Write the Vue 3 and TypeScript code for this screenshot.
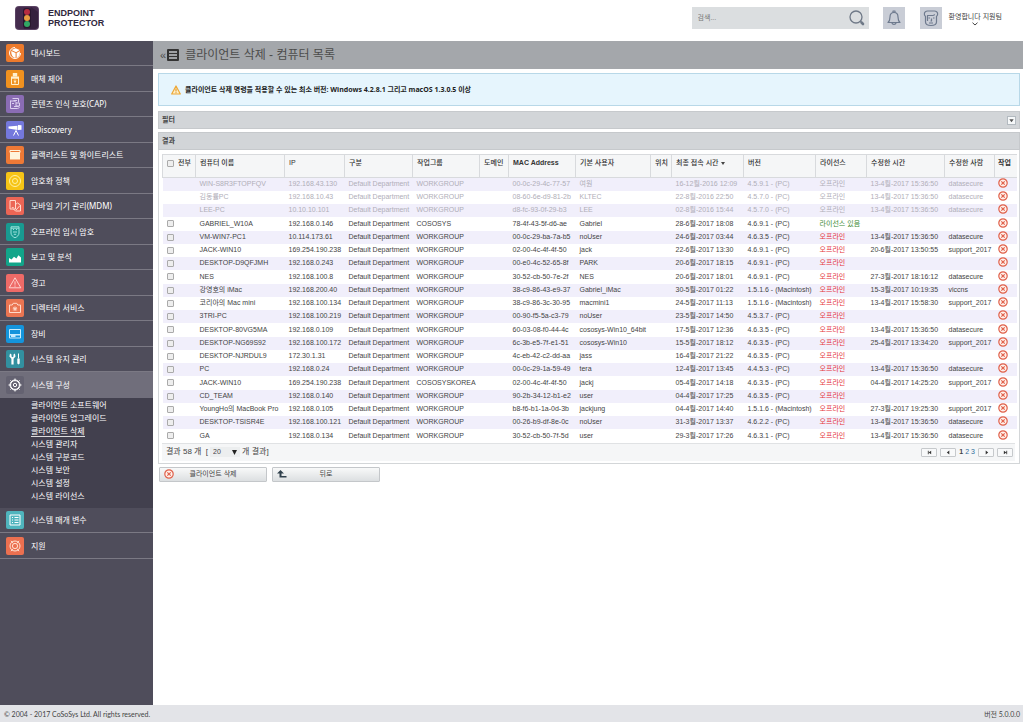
<script setup lang="ts">
import { ref } from 'vue'

interface MenuItem {
  label: string
  color: string
  line?: string
  solid?: string
  tint?: string
}

interface Computer {
  name: string
  ip: string
  group: string
  mac: string
  user: string
  seen: string
  version: string
  license: string
  modified: string
  by: string
  muted: boolean
}

const mainMenu: MenuItem[] = [
  { label: '대시보드', color: '#ec7a2c', line: 'M9 3.5A5.5 5.5 0 1 0 14.5 9', solid: 'M5.5 6l4-1.8 4.2 1.8-3.6 2.2zM5.3 7l4.3 2v4.8C7 13.6 5 11.5 5.3 7zM10.6 9.1l3.3-2c.3 3.4-.8 5.6-3.3 6.6z' },
  { label: '매체 제어', color: '#f0911f', line: 'M5.5 8h7v6.5h-7zM9 9.5v4M7.7 11l1.3 1 1.3-1', solid: 'M6.8 3h4.4v3.2H6.8zM5 6.5h8v2H5z', tint: '#fff0cf' },
  { label: '콘텐즈 인식 보호(CAP)', color: '#8a6cb4', line: 'M6.5 3.5h6v4M4.5 6h4l2 2M4.5 5.5v8h7c2 0 2-2 1-2H8M7.5 5.5h3.5M6 8.5h2M10 8h3.500v3H10z', tint: '#dccff0' },
  { label: 'eDiscovery', color: '#7478dc', line: 'M10 9.5L7.5 14.5M10 9.5l2.5 5', solid: 'M2.5 5.5l9-.8v4.2l-9-1.4zM12 4l3.5.3v4.4L12 9z' },
  { label: '블랙리스트 및 화이트리스트', color: '#ee7936', line: 'M4 4.5h10v2H4z', solid: 'M4 7h10v6.5H4z', tint: '#fff4dc' },
  { label: '암호화 정책', color: '#f6c416', line: 'M9 3.5a5.5 5.5 0 1 0 0 11a5.5 5.5 0 1 0 0-11M9 6.5a2.5 2.5 0 1 0 0 5a2.5 2.5 0 1 0 0-5', tint: '#fff1a4' },
  { label: '모바일 기기 관리(MDM)', color: '#ec6555', line: 'M4 3.5h5.5v8.5H4zM9.5 7.5l2-1.5 3 2v6H9.5l-2-2M10 13l4-4.5M5.8 10.7h2', tint: '#ffd9cd' },
  { label: '오프라인 임시 암호', color: '#189a91', line: 'M5 3.8h8V10c0 2.3-1.8 3.8-4 4.8C6.8 13.8 5 12.3 5 10zM7 6.5h1M10 6.5h1M7 9h4M7.8 11.3h2.4M5 5.2h8', tint: '#9be1dc' },
  { label: '보고 및 분석', color: '#12a58a', solid: 'M3 14.5V10l2.5 1.5L8 8.8l2.4 1.8 2-3.4L15 9.4v5.1z' },
  { label: '경고', color: '#ee6a67', line: 'M9 3.8l5.8 10H3.2zM9 7.3v3.4M9 11.5v1.2', tint: '#ffd3d0' },
  { label: '디렉터리 서비스', color: '#ea7552', line: 'M3.5 6h2.7l1-1.7h3.6l1 1.7h2.7v7.5h-11zM9 7.5v4.5M6.8 9.8h4.4M7.4 8.1l3.2 3.3M10.6 8.1l-3.2 3.3', tint: '#ffd9c9' },
  { label: '장비', color: '#1494dc', line: 'M3.5 4.5h11v8.5h-11z', solid: 'M4 9h10v1.5H4zM5 9.5h4.5V12H5z', tint: '#c7ecff' },
  { label: '시스템 유지 관리', color: '#3290a0', line: 'M12.5 3.5v5', solid: 'M4 3.5l1.5 1v2l1 .8 1-.8v-2l1.4-1 .6 3-1.9 2.3v5.7H5.4V8.8L3.4 6.5zM11.3 8.5h2.4v5l-1.2 1-1.2-1z' },
  { label: '시스템 구성', color: '#646271', line: 'M9 4a5 5 0 1 0 0 10a5 5 0 1 0 0-10M9 4.600a4.400 4.400 0 1 0 0 8.800a4.400 4.400 0 1 0 0-8.800M9 7.3a1.7 1.7 0 1 0 0 3.4a1.7 1.7 0 1 0 0-3.4M9 2.5v2M9 13.5v2M2.5 9h2M13.5 9h2M4.4 4.4l1.4 1.4M12.2 12.2l1.4 1.4M13.6 4.4l-1.4 1.4M5.8 12.2l-1.4 1.4' },
]

const lowerMenu: MenuItem[] = [
  { label: '시스템 매개 변수', color: '#4fb4bd', line: 'M4 4h10v10H4zM6 6.5h1M8.5 6.5h4M6 9h1M8.5 9h4M6 11.5h1M8.5 11.5h4' },
  { label: '지원', color: '#ec7050', line: 'M9 4a5 5 0 1 0 0 10a5 5 0 1 0 0-10M9 6.4a2.6 2.6 0 1 0 0 5.2a2.6 2.6 0 1 0 0-5.2M5 3.8l2 2.5M13 3.8l-2 2.5M5 14.2l2-2.5M13 14.2l-2-2.5', tint: '#ffe3d3' },
]

const subMenu = ['클라이언트 소프트웨어', '클라이언트 업그레이드', '클라이언트 삭제', '시스템 관리자', '시스템 구분코드', '시스템 보안', '시스템 설정', '시스템 라이선스']

const columns = [
  { label: '컴퓨터 이름', width: 89 },
  { label: 'IP', width: 60 },
  { label: '구분', width: 68 },
  { label: '작업그룹', width: 67 },
  { label: '도메인', width: 29 },
  { label: 'MAC Address', width: 67 },
  { label: '기본 사용자', width: 75 },
  { label: '위치', width: 21 },
  { label: '최종 접속 시간', width: 72, sorted: true },
  { label: '버전', width: 72 },
  { label: '라이선스', width: 51 },
  { label: '수정한 시간', width: 78 },
  { label: '수정한 사람', width: 50 },
  { label: '작업', width: 22 },
]

const off = '오프라인'
const source: string[][] = [
  ['WIN-S8R3FTOPFQV', '192.168.43.130', 'WORKGROUP', '00-0c-29-4c-77-57', '여원', '16-12월-2016 12:09', '4.5.9.1 - (PC)', off, '13-4월-2017 15:36:50', 'datasecure'],
  ['김동률PC', '192.168.10.43', 'WORKGROUP', '08-60-6e-d9-81-2b', 'KLTEC', '22-8월-2016 22:50', '4.5.7.0 - (PC)', off, '13-4월-2017 15:36:50', 'datasecure'],
  ['LEE-PC', '10.10.10.101', 'WORKGROUP', 'd8-fc-93-0f-29-b3', 'LEE', '02-8월-2016 15:44', '4.5.7.0 - (PC)', off, '13-4월-2017 15:36:50', 'datasecure'],
  ['GABRIEL_W10A', '192.168.0.146', 'COSOSYS', '78-4f-43-5f-d6-ae', 'Gabriel', '28-6월-2017 18:08', '4.6.9.1 - (PC)', '라이선스 있음', '', ''],
  ['VM-WIN7-PC1', '10.114.173.61', 'WORKGROUP', '00-0c-29-ba-7a-b5', 'noUser', '24-6월-2017 03:44', '4.6.3.5 - (PC)', off, '13-4월-2017 15:36:50', 'datasecure'],
  ['JACK-WIN10', '169.254.190.238', 'WORKGROUP', '02-00-4c-4f-4f-50', 'jack', '22-6월-2017 13:30', '4.6.9.1 - (PC)', off, '20-6월-2017 13:50:55', 'support_2017'],
  ['DESKTOP-D9QFJMH', '192.168.0.243', 'WORKGROUP', '00-e0-4c-52-65-8f', 'PARK', '20-6월-2017 18:15', '4.6.9.1 - (PC)', off, '', ''],
  ['NES', '192.168.100.8', 'WORKGROUP', '30-52-cb-50-7e-2f', 'NES', '20-6월-2017 18:01', '4.6.9.1 - (PC)', off, '27-3월-2017 18:16:12', 'datasecure'],
  ['강영호의 iMac', '192.168.200.40', 'WORKGROUP', '38-c9-86-43-e9-37', 'Gabriel_iMac', '30-5월-2017 01:22', '1.5.1.6 - (Macintosh)', off, '15-3월-2017 10:19:35', 'viccns'],
  ['코리아의 Mac mini', '192.168.100.134', 'WORKGROUP', '38-c9-86-3c-30-95', 'macmini1', '24-5월-2017 11:13', '1.5.1.6 - (Macintosh)', off, '13-4월-2017 15:58:30', 'support_2017'],
  ['3TRI-PC', '192.168.100.219', 'WORKGROUP', '00-90-f5-5a-c3-79', 'noUser', '23-5월-2017 14:50', '4.5.3.7 - (PC)', off, '', ''],
  ['DESKTOP-80VG5MA', '192.168.0.109', 'WORKGROUP', '60-03-08-f0-44-4c', 'cososys-Win10_64bit', '17-5월-2017 12:36', '4.6.3.5 - (PC)', off, '13-4월-2017 15:36:50', 'datasecure'],
  ['DESKTOP-NG69S92', '192.168.100.172', 'WORKGROUP', '6c-3b-e5-7f-e1-51', 'cososys-Win10', '15-5월-2017 18:12', '4.6.3.5 - (PC)', off, '25-4월-2017 13:34:20', 'support_2017'],
  ['DESKTOP-NJRDUL9', '172.30.1.31', 'WORKGROUP', '4c-eb-42-c2-dd-aa', 'jass', '16-4월-2017 21:22', '4.6.3.5 - (PC)', off, '', ''],
  ['PC', '192.168.0.24', 'WORKGROUP', '00-0c-29-1a-59-49', 'tera', '12-4월-2017 13:45', '4.4.5.3 - (PC)', off, '13-4월-2017 15:36:50', 'datasecure'],
  ['JACK-WIN10', '169.254.190.238', 'COSOSYSKOREA', '02-00-4c-4f-4f-50', 'jackj', '05-4월-2017 14:18', '4.6.3.5 - (PC)', off, '04-4월-2017 14:25:20', 'support_2017'],
  ['CD_TEAM', '192.168.0.140', 'WORKGROUP', '90-2b-34-12-b1-e2', 'user', '04-4월-2017 17:25', '4.6.3.5 - (PC)', off, '', ''],
  ['YoungHo의 MacBook Pro', '192.168.0.105', 'WORKGROUP', 'b8-f6-b1-1a-0d-3b', 'jackjung', '04-4월-2017 14:40', '1.5.1.6 - (Macintosh)', off, '27-3월-2017 19:25:30', 'support_2017'],
  ['DESKTOP-TSISR4E', '192.168.100.121', 'WORKGROUP', '00-26-b9-df-8e-0c', 'noUser', '31-3월-2017 13:37', '4.6.2.2 - (PC)', off, '13-4월-2017 15:36:50', 'datasecure'],
  ['GA', '192.168.0.134', 'WORKGROUP', '30-52-cb-50-7f-5d', 'user', '29-3월-2017 17:26', '4.6.3.1 - (PC)', off, '13-4월-2017 15:36:50', 'datasecure'],
]

const computers: Computer[] = source.map(([name, ip, group, mac, user, seen, version, license, modified, by], i) => ({
  name, ip, group, mac, user, seen, version, license, modified, by, muted: i < 3,
}))

const query = ref('')
const pageSize = ref('20')
const selected = ref<number[]>([])
</script>

<template>
  <div class="page">
    <header class="top">
      <a class="brand" href="#">
        <svg class="logo" viewBox="0 0 24 24" aria-hidden="true">
          <rect width="24" height="24" rx="4" fill="#5a4263" />
          <rect x="1" y="1" width="22" height="22" rx="3" fill="#452c4e" />
          <path d="M23 6v13a4 4 0 0 1-4 4H9l-1-4 8-18z" fill="#35213e" />
          <rect x="8" y="2" width="8" height="20" rx="3" fill="#29172f" />
          <circle cx="12" cy="6" r="3" fill="#b72c40" />
          <circle cx="12" cy="12" r="3" fill="#e89c42" />
          <circle cx="12" cy="18" r="3" fill="#32a764" />
        </svg>
        <span class="brand-name">ENDPOINT<br />PROTECTOR</span>
      </a>
      <form class="search" @submit.prevent>
        <input v-model="query" type="text" placeholder="검색..." aria-label="검색" />
        <button type="submit" aria-label="검색">
          <svg viewBox="0 0 18 18" aria-hidden="true"><g fill="none" stroke="#6f7987"><circle cx="8" cy="8" r="6" stroke-width="1.3" /><path d="M12.3 12.3l1 1" /><path d="M13.5 13.5l1.500 1.500" stroke-width="2.6" stroke-linecap="round" /></g></svg>
        </button>
      </form>
      <button class="square" type="button" aria-label="알림">
        <svg viewBox="0 0 22 22" aria-hidden="true"><g fill="none" stroke="#6e7a8e" stroke-width="1.200" stroke-linejoin="round"><path d="M5 15.500c1.800-1.400 2-2.800 2-5.500 0-2.800 1.500-4.500 4-4.500s4 1.700 4 4.500c0 2.700.2 4.100 2 5.500z" /><path d="M10 5.500V4h2v1.500M9 15.500c0 2.500 4 2.500 4 0" /></g></svg>
      </button>
      <div class="account">
        <span class="square">
          <svg viewBox="0 0 22 22" aria-hidden="true"><g fill="none" stroke="#6e7a8e" stroke-width="1.200" stroke-linejoin="round"><path d="M5.500 9.500C3.500 8 4 4 7.500 4h7c3.500 0 4 4 2 5.500V15c0 2-2 3.500-5.500 3.500S5.500 17 5.500 15z" /><path d="M7.500 14V8.500h5.500c1 0 1.500-.5 1.500-1.200M8.500 11H10M13 11h1.500M11.500 11.500V14h-1M9 16h4" /></g></svg>
        </span>
        <button class="welcome" type="button">
          환영합니다 지원팀
          <svg viewBox="0 0 6 4" aria-hidden="true"><path d="M.5.7L3 3 5.500.7" fill="none" stroke="#444" /></svg>
        </button>
      </div>
    </header>

    <div class="body">
      <nav class="side">
        <a v-for="(item, i) in mainMenu" :key="item.label" href="#" class="item" :class="{ current: i === 13 }">
          <svg viewBox="0 0 18 18" aria-hidden="true">
            <rect width="18" height="18" rx="2" :fill="item.color" />
            <path v-if="item.line" :d="item.line" fill="none" :stroke="item.tint || '#fff'" />
            <path v-if="item.solid" :d="item.solid" :fill="item.tint || '#fff'" />
          </svg>
          {{ item.label }}
        </a>
        <ul class="sub">
          <li v-for="entry in subMenu" :key="entry">
            <a href="#" :class="{ here: entry === '클라이언트 삭제' }">{{ entry }}</a>
          </li>
        </ul>
        <a v-for="item in lowerMenu" :key="item.label" href="#" class="item">
          <svg viewBox="0 0 18 18" aria-hidden="true">
            <rect width="18" height="18" rx="2" :fill="item.color" />
            <path :d="item.line" fill="none" :stroke="item.tint || '#fff'" />
          </svg>
          {{ item.label }}
        </a>
      </nav>

      <main class="main">
        <div class="title">
          <a href="#" aria-label="메뉴 접기">«</a>
          <svg viewBox="0 0 12 12" aria-hidden="true"><rect width="12" height="12" rx="1" fill="#333" /><path d="M2 3h8M2 6h8M2 9h8" stroke="#c4c6ca" stroke-width="1.300" /></svg>
          <h1>클라이언트 삭제 - 컴퓨터 목록</h1>
        </div>

        <div class="content">
          <p class="notice">
            <svg viewBox="0 0 10 10" aria-hidden="true"><path d="M5 1l4.300 8H.7z" fill="#fff0c8" stroke="#eda736" stroke-width="1.200" stroke-linejoin="round" /><path d="M5 3.500v3M5 7.200v1" stroke="#d98a1c" /></svg>
            <span>클라이언트 삭제 명령을 적용할 수 있는 최소 버전: Windows 4.2.8.1 그리고 macOS 1.3.0.5 이상</span>
          </p>

          <section class="bar filter">
            <h2>필터</h2>
            <button type="button" aria-label="필터 열기"><svg viewBox="0 0 8 8" aria-hidden="true"><path d="M1.500 2.500h5L4 6z" fill="#555" /></svg></button>
          </section>

          <section class="results">
            <div class="bar"><h2>결과</h2></div>
            <div class="panel">
              <table>
                <colgroup>
                  <col :style="{ width: '33px' }" />
                  <col v-for="c in columns" :key="c.label" :style="{ width: c.width + 'px' }" />
                </colgroup>
                <thead>
                  <tr>
                    <th scope="col"><label class="all"><input type="checkbox" />전부</label></th>
                    <th v-for="c in columns" :key="c.label" scope="col">
                      {{ c.label }}<svg v-if="c.sorted" class="sort" viewBox="0 0 4 3" aria-hidden="true"><path d="M0 0h4L2 3z" fill="#444" /></svg>
                    </th>
                  </tr>
                </thead>
                <tbody>
                  <tr v-for="(c, i) in computers" :key="i" :class="{ muted: c.muted }">
                    <td><input v-if="!c.muted" v-model="selected" type="checkbox" :value="i" :aria-label="c.name" /></td>
                    <td>{{ c.name }}</td>
                    <td>{{ c.ip }}</td>
                    <td>Default Department</td>
                    <td>{{ c.group }}</td>
                    <td></td>
                    <td>{{ c.mac }}</td>
                    <td>{{ c.user }}</td>
                    <td></td>
                    <td>{{ c.seen }}</td>
                    <td>{{ c.version }}</td>
                    <td :class="c.license === off ? 'offline' : 'licensed'">{{ c.license }}</td>
                    <td>{{ c.modified }}</td>
                    <td>{{ c.by }}</td>
                    <td class="action">
                      <button type="button" :aria-label="c.name + ' 삭제'">
                        <svg viewBox="0 0 10 10" aria-hidden="true"><circle cx="5" cy="5" r="4.200" fill="#fff1eb" stroke="#e0604a" stroke-width="1.200" /><path d="M3.300 3.300l3.400 3.400M6.700 3.300L3.300 6.700" stroke="#e0604a" stroke-width="1.200" /></svg>
                      </button>
                    </td>
                  </tr>
                </tbody>
              </table>
              <div class="pager">
                <label class="count">결과 58 개 &nbsp;[
                  <span class="pick">
                    <select v-model="pageSize"><option>20</option><option>50</option></select>
                    <svg viewBox="0 0 6 6" aria-hidden="true"><path d="M0 0h6L3 6z" fill="#222" /></svg>
                  </span>
                  개 결과]
                </label>
                <div class="pages">
                  <button type="button" aria-label="처음"><svg viewBox="0 0 6 6"><path d="M1 1h1v4H1zM5 1v4L2 3z" /></svg></button>
                  <button type="button" aria-label="이전"><svg viewBox="0 0 6 6"><path d="M4 .5v5L1 3z" /></svg></button>
                  <span><b>1</b><a href="#">2</a><a href="#">3</a></span>
                  <button type="button" aria-label="다음"><svg viewBox="0 0 6 6"><path d="M2 .5v5L5 3z" /></svg></button>
                  <button type="button" aria-label="마지막"><svg viewBox="0 0 6 6"><path d="M4 1h1v4H4zM1 1v4l3-2z" /></svg></button>
                </div>
              </div>
            </div>
          </section>

          <div class="buttons">
            <button type="button">
              <svg viewBox="0 0 10 10" aria-hidden="true"><circle cx="5" cy="5" r="4.200" fill="#fff1eb" stroke="#e0604a" stroke-width="1.200" /><path d="M3.300 3.300l3.400 3.400M6.700 3.300L3.300 6.700" stroke="#e0604a" stroke-width="1.200" /></svg>
              <span>클라이언트 삭제</span>
            </button>
            <button type="button">
              <svg viewBox="0 0 10 10" aria-hidden="true"><path d="M3.500 1L0 4.500h2.500V8.500H9.500V7H4.500V4.500H7z" fill="#31414d" /></svg>
              <span>뒤로</span>
            </button>
          </div>
        </div>
      </main>
    </div>

    <footer class="foot">
      <span>© 2004 - 2017 CoSoSys Ltd. All rights reserved.</span>
      <span>버전 5.0.0.0</span>
    </footer>
  </div>
</template>

<style>
html,
body {
  background: #fff;
}
</style>

<style scoped>
.page {
  display: flex;
  flex-direction: column;
  min-height: 100vh;
  font: 7px/10px "Liberation Sans", "Noto Sans CJK KR", sans-serif;
  color: #444;
}
.page *,
.page *::before {
  box-sizing: border-box;
}
button {
  padding: 0;
  border: 0;
  background: none;
  font: inherit;
  color: inherit;
}
a {
  color: inherit;
  text-decoration: none;
}
svg {
  display: block;
  flex: none;
}
.top {
  display: flex;
  align-items: flex-start;
  height: 41px;
  padding: 7px 21px 0 15px;
}
.brand {
  display: flex;
  gap: 9px;
  margin: -1px auto 0 0;
  align-items: center;
}
.logo {
  width: 24px;
  height: 24px;
}
.brand-name {
  font: bold 9px/10px "Liberation Sans", sans-serif;
  color: #31283d;
}
.search {
  display: flex;
  width: 177px;
  height: 22px;
  margin-right: 14px;
  background: #dbdee0;
}
.search input {
  flex: 1;
  min-width: 0;
  padding: 0 6px;
  border: 0;
  background: none;
  font: inherit;
  outline: none;
}
.search input::placeholder {
  color: #777;
}
.search button {
  padding: 2px 3px;
}
.search svg {
  width: 18px;
  height: 18px;
}
.square,
.square svg {
  width: 22px;
  height: 22px;
}
.square {
  background: #c9cdd6;
}
.account {
  display: flex;
  margin-left: 15px;
  gap: 7px;
}
.welcome {
  display: flex;
  flex-direction: column;
  align-items: center;
  padding-top: 5px;
}
.welcome svg {
  width: 6px;
  height: 4px;
}
.body {
  display: flex;
  flex: 1;
}
.side {
  flex: none;
  width: 153px;
  background: #4f4d5b;
  color: #fff;
  font: 8px/12px "Noto Sans", "Noto Sans CJK KR", sans-serif;
}
.item {
  display: flex;
  align-items: center;
  gap: 7px;
  height: 25px;
  padding-left: 6px;
  border-bottom: 1px solid #7b7984;
}
.item:nth-of-type(even) {
  height: 26px;
}
.item svg {
  width: 18px;
  height: 18px;
}
.current {
  background: #706e7b;
  border-color: #706e7b;
}
.sub {
  margin: 0;
  padding: 0 0 6px 31px;
  height: 110px;
  background: #42404e;
  list-style: none;
}
.sub li {
  height: 13px;
  line-height: 13px;
}
.sub .here {
  border-bottom: 1px solid #ddd;
}
.main {
  flex: 1;
  min-width: 0;
}
.title {
  display: flex;
  align-items: center;
  height: 28px;
  padding-left: 7px;
  background: #a4a7ab;
  color: #4c4c4c;
}
.title a {
  font-size: 11px;
}
.title svg {
  width: 12px;
  height: 12px;
  margin: 0 6px 0 1px;
}
.title h1 {
  margin: 0;
  font-size: 12px;
  font-weight: 400;
}
.content {
  padding: 4px 3px 0 5px;
}
.notice {
  display: flex;
  align-items: center;
  gap: 4px;
  height: 33px;
  margin: 0 0 5px;
  padding-left: 12px;
  border: 1px solid #b8d8e8;
  background: #e6f5fd;
  color: #222;
  font: bold 7px/10px "Noto Sans", "Noto Sans CJK KR", sans-serif;
}
.notice svg {
  width: 10px;
  height: 10px;
}
.bar {
  display: flex;
  align-items: center;
  justify-content: space-between;
  height: 18px;
  padding: 0 3px;
  background: #d2d5d8;
  border: 1px solid #c6c9cc;
}
.bar h2 {
  margin: 0;
  font-size: 7px;
  font-weight: 700;
}
.bar button {
  border: 1px solid #b3bac0;
  background: #f6f8f9;
}
.bar svg {
  width: 7px;
  height: 7px;
}
.filter {
  margin-bottom: 3px;
}
.panel {
  padding: 4px 4px 2px 3px;
  border: 1px solid #d3d6d8;
  border-top: 0;
}
table {
  width: 100%;
  border-collapse: collapse;
  table-layout: fixed;
}
th,
td {
  padding: 0 0 0 4px;
  text-align: left;
  white-space: nowrap;
}
th {
  height: 23px;
  padding-top: 3px;
  vertical-align: top;
  background: #f5f6f7;
  border: solid #d8dadd;
  border-width: 1px 0 1px 1px;
  color: #333;
  font-weight: 500;
}
th:nth-child(7),
th:last-child {
  font-weight: 700;
}
th:last-child,
td:last-child {
  padding-left: 3px;
}
td {
  height: 13px;
  line-height: 12px;
}
tr:nth-child(4n) td {
  height: 14px;
}
tbody tr:nth-child(odd) {
  background: #f1effb;
}
.all {
  display: flex;
  align-items: center;
  gap: 4px;
}
input[type="checkbox"] {
  appearance: none;
  display: block;
  width: 7px;
  height: 7px;
  margin: 0;
  border: 1px solid #aaa;
  border-radius: 1px;
  background: #eee;
}
input[type="checkbox"]:checked {
  background: #456;
}
.sort {
  display: inline-block;
  width: 4px;
  height: 3px;
  margin-left: 2px;
}
.offline {
  color: #e5323b;
}
.licensed {
  color: #3c8a35;
}
.muted td {
  color: #b0aeb8;
}
td.action {
  padding-bottom: 2px;
}
.action button {
  display: block;
}
.action svg {
  width: 10px;
  height: 10px;
}
.pager {
  display: flex;
  align-items: center;
  justify-content: space-between;
  height: 18px;
  padding: 0 2px 0 4px;
  background: #f5f6f7;
  border-top: 1px solid #e0e2e4;
}
.count {
  display: flex;
  align-items: center;
  gap: 2px;
  font-size: 8px;
}
.pick {
  display: flex;
  align-items: center;
  width: 30px;
  padding: 0 3px;
  background: #eceeef;
}
.pick select {
  flex: 1;
  min-width: 0;
  padding: 0;
  border: 0;
  appearance: none;
  background: none;
  font: 7px/10px "Liberation Sans", sans-serif;
  color: inherit;
}
.pick svg {
  width: 5px;
  height: 5px;
}
.pages {
  display: flex;
  align-items: center;
  gap: 3px;
}
.pages button {
  display: grid;
  place-items: center;
  width: 16px;
  height: 9px;
  border: 1px solid #c6c9cc;
  border-radius: 1px;
  background: #f8f9fa;
}
.pages svg {
  width: 5px;
  height: 5px;
  fill: #333;
}
.pages span {
  display: flex;
  gap: 2px;
}
.pages a {
  color: #2d6d9c;
}
.buttons {
  display: flex;
  gap: 5px;
  padding: 3px 1px;
}
.buttons button {
  display: flex;
  align-items: center;
  width: 108px;
  height: 15px;
  padding: 0 4px;
  border: 1px solid #c4c7ca;
  border-radius: 1px;
  background: linear-gradient(#f8f9f9, #dcdfe1);
}
.buttons svg {
  width: 10px;
  height: 10px;
}
.buttons span {
  flex: 1;
  padding-right: 10px;
  text-align: center;
}
.foot {
  display: flex;
  align-items: center;
  justify-content: space-between;
  height: 17px;
  padding: 0 3px 0 4px;
  background: #e3e4e8;
  font-family: Lato, "Noto Sans CJK KR", sans-serif;
}
</style>
